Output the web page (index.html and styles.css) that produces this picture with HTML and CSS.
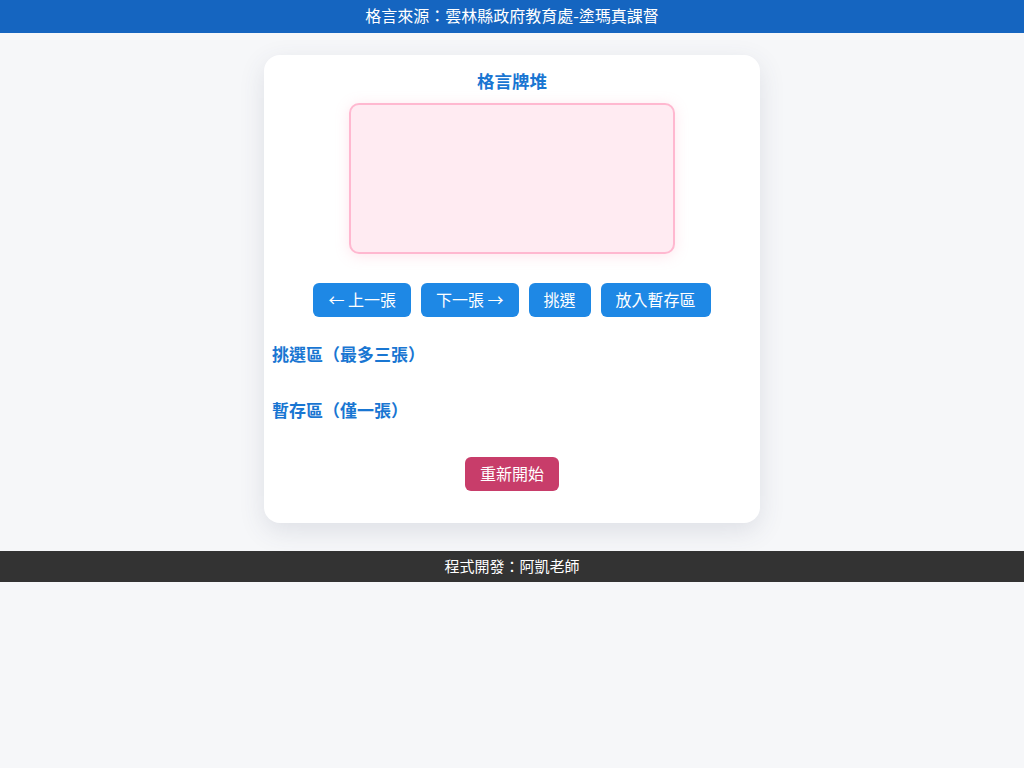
FILE: index.html
```html
<!DOCTYPE html>
<html lang="zh-Hant">
<head>
<meta charset="utf-8">
<title>格言牌堆</title>
<link rel="stylesheet" href="styles.css">
</head>
<body>
<header class="top-bar">格言來源：雲林縣政府教育處-塗瑪真課督</header>
<main class="main">
  <section class="card">
    <h2 class="title">格言牌堆</h2>
    <div class="deck"></div>
    <div class="controls">
      <button class="btn">← 上一張</button>
      <button class="btn">下一張 →</button>
      <button class="btn">挑選</button>
      <button class="btn">放入暫存區</button>
    </div>
    <h3 class="zone-title">挑選區（最多三張）</h3>
    <div class="zone"></div>
    <h3 class="zone-title">暫存區（僅一張）</h3>
    <div class="zone"></div>
    <div class="restart-row">
      <button class="btn btn-restart">重新開始</button>
    </div>
  </section>
</main>
<footer class="bottom-bar">程式開發：阿凱老師</footer>
</body>
</html>
```

FILE: styles.css
```css
* { box-sizing: border-box; }
html, body {
  margin: 0;
  padding: 0;
  background: #f6f7f9;
  font-family: "Noto Sans CJK TC", "Noto Sans", sans-serif;
}
.top-bar {
  background: #1565c0;
  color: #fff;
  font-size: 16px;
  line-height: 23px;
  padding: 4px 0 6px;
  height: 33px;
  text-align: center;
}
.main {
  display: flex;
  justify-content: center;
  padding: 22px 0 28px;
}
.card {
  width: 496px;
  background: #fff;
  border-radius: 16px;
  box-shadow: 0 8px 26px rgba(60, 70, 100, 0.13);
  padding: 14px 8px 32px;
  display: flex;
  flex-direction: column;
}
.title {
  margin: 0;
  text-align: center;
  color: #1976d2;
  font-size: 17.5px;
  font-weight: bold;
  line-height: 23px;
  padding-bottom: 1px;
}
.deck {
  width: 326px;
  height: 151px;
  margin: 10px auto 0;
  background: #ffebf2;
  border: 2px solid #ffb8d0;
  border-radius: 10px;
  box-shadow: 0 2px 14px rgba(255, 150, 180, 0.25);
}
.controls {
  display: flex;
  justify-content: center;
  gap: 10px;
  margin-top: 29px;
}
.btn {
  font-family: inherit;
  font-size: 16px;
  line-height: 32px;
  height: 34px;
  padding: 0 15px 2px;
  border: none;
  border-radius: 6px;
  background: #1e88e5;
  color: #fff;
  cursor: pointer;
}
.zone-title {
  margin: 25px 0 0;
  color: #1976d2;
  font-size: 17px;
  font-weight: bold;
  line-height: 23px;
  padding-bottom: 1px;
}
.zone {
  min-height: 8px;
}
.zone + .zone-title {
  margin-top: 24px;
}
.restart-row {
  display: flex;
  justify-content: center;
  margin-top: 27px;
}
.btn-restart {
  background: #c83d6a;
}
.bottom-bar {
  background: #333;
  color: #fff;
  font-size: 15px;
  line-height: 21px;
  padding: 4px 0 6px;
  height: 31px;
  text-align: center;
}
```
